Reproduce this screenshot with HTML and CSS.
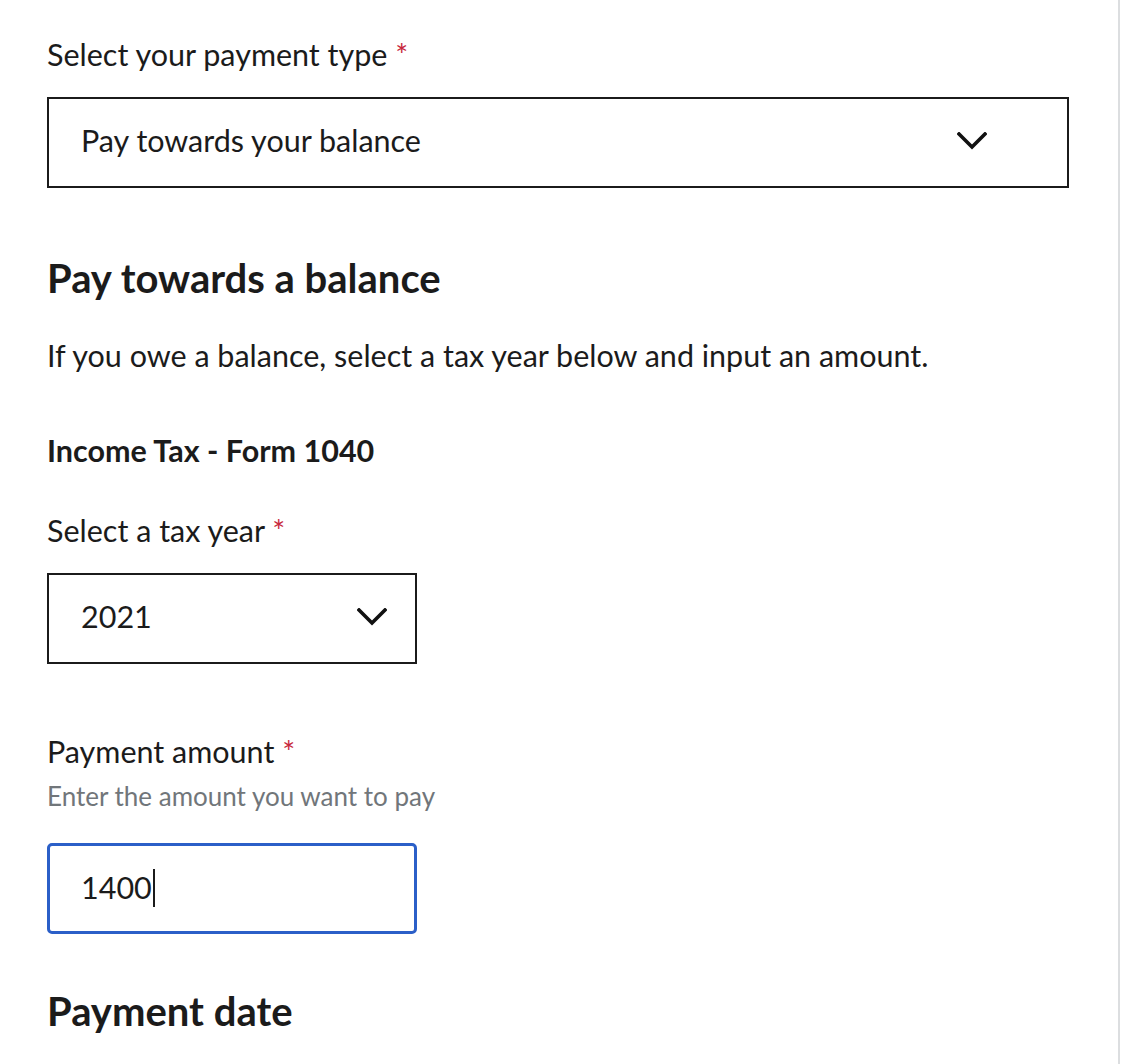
FILE: index.html
```html
<!DOCTYPE html>
<html lang="en">
<head>
<meta charset="utf-8">
<title>Payment</title>
<link rel="stylesheet" href="styles.css">
</head>
<body>
<main class="page">
  <div class="form">
    <label class="label label-first">Select your payment type <span class="req">*</span></label>
    <div class="select select-wide">
      <span class="select-value">Pay towards your balance</span>
      <svg class="chev" width="30" height="18" viewBox="0 0 30 18"><path d="M2 2 L15 15 L28 2" fill="none" stroke="#111" stroke-width="3.6" stroke-linecap="square"/></svg>
    </div>

    <h2 class="h2">Pay towards a balance</h2>
    <p class="para">If you owe a balance, select a tax year below and input an amount.</p>

    <h3 class="h3">Income Tax - Form 1040</h3>

    <label class="label label-year">Select a tax year <span class="req">*</span></label>
    <div class="select select-narrow">
      <span class="select-value">2021</span>
      <svg class="chev" width="30" height="18" viewBox="0 0 30 18"><path d="M2 2 L15 15 L28 2" fill="none" stroke="#111" stroke-width="3.6" stroke-linecap="square"/></svg>
    </div>

    <label class="label label-amount">Payment amount <span class="req">*</span></label>
    <div class="hint">Enter the amount you want to pay</div>
    <div class="input input-focus"><span class="input-value">1400</span><span class="caret"></span></div>

    <h2 class="h2 h2-date">Payment date</h2>
  </div>
</main>
</body>
</html>
```

FILE: styles.css
```css
html, body {
  margin: 0;
  padding: 0;
  background: #fff;
}
body {
  font-family: Lato, "Open Sans", sans-serif;
  color: #1b1b1b;
}
.page {
  width: 1118px;
  height: 1064px;
  border-right: 2px solid #dcdee0;
  box-sizing: content-box;
  overflow: hidden;
}
.form {
  padding: 36px 0 0 47px;
  display: flex;
  flex-direction: column;
  align-items: flex-start;
}
.label {
  display: block;
  font-size: 30.5px;
  line-height: 1.2;
}
.req {
  color: #c7283d;
}
.label-year { margin-top: 44px; }
.label-amount { margin-top: 69px; }
.select {
  box-sizing: border-box;
  height: 91px;
  flex: 0 0 91px;
  border: 2px solid #1b1b1b;
  display: flex;
  align-items: center;
  justify-content: space-between;
  margin-top: 24px;
  padding-left: 32px;
  padding-bottom: 4px;
}
.select-wide {
  width: 1022px;
  padding-right: 80px;
}
.select-narrow {
  width: 370px;
  padding-right: 28px;
}
.select-value {
  font-size: 30.5px;
  line-height: 1.2;
}
.chev {
  display: block;
  margin-top: 2px;
}
.h2 {
  margin: 66px 0 0;
  font-size: 40px;
  line-height: 1.2;
  font-weight: 700;
}
.para {
  margin: 35px 0 0;
  font-size: 30.5px;
  line-height: 1.2;
}
.h3 {
  margin: 58.5px 0 0;
  font-size: 30.5px;
  line-height: 1.2;
  font-weight: 700;
}
.hint {
  margin-top: 12px;
  font-size: 26px;
  line-height: 1.2;
  color: #71767a;
}
.input {
  box-sizing: border-box;
  width: 370px;
  height: 91px;
  flex: 0 0 91px;
  margin-top: 30.5px;
  padding-left: 31px;
  padding-bottom: 2px;
  display: flex;
  align-items: center;
}
.input-focus {
  border: 3px solid #2b5fc8;
  border-radius: 5px;
}
.input-value {
  font-size: 30.5px;
  line-height: 1.2;
}
.caret {
  display: inline-block;
  width: 2px;
  height: 38px;
  background: #1b1b1b;
  margin-left: 1px;
}
.h2-date {
  margin-top: 53px;
}
```
